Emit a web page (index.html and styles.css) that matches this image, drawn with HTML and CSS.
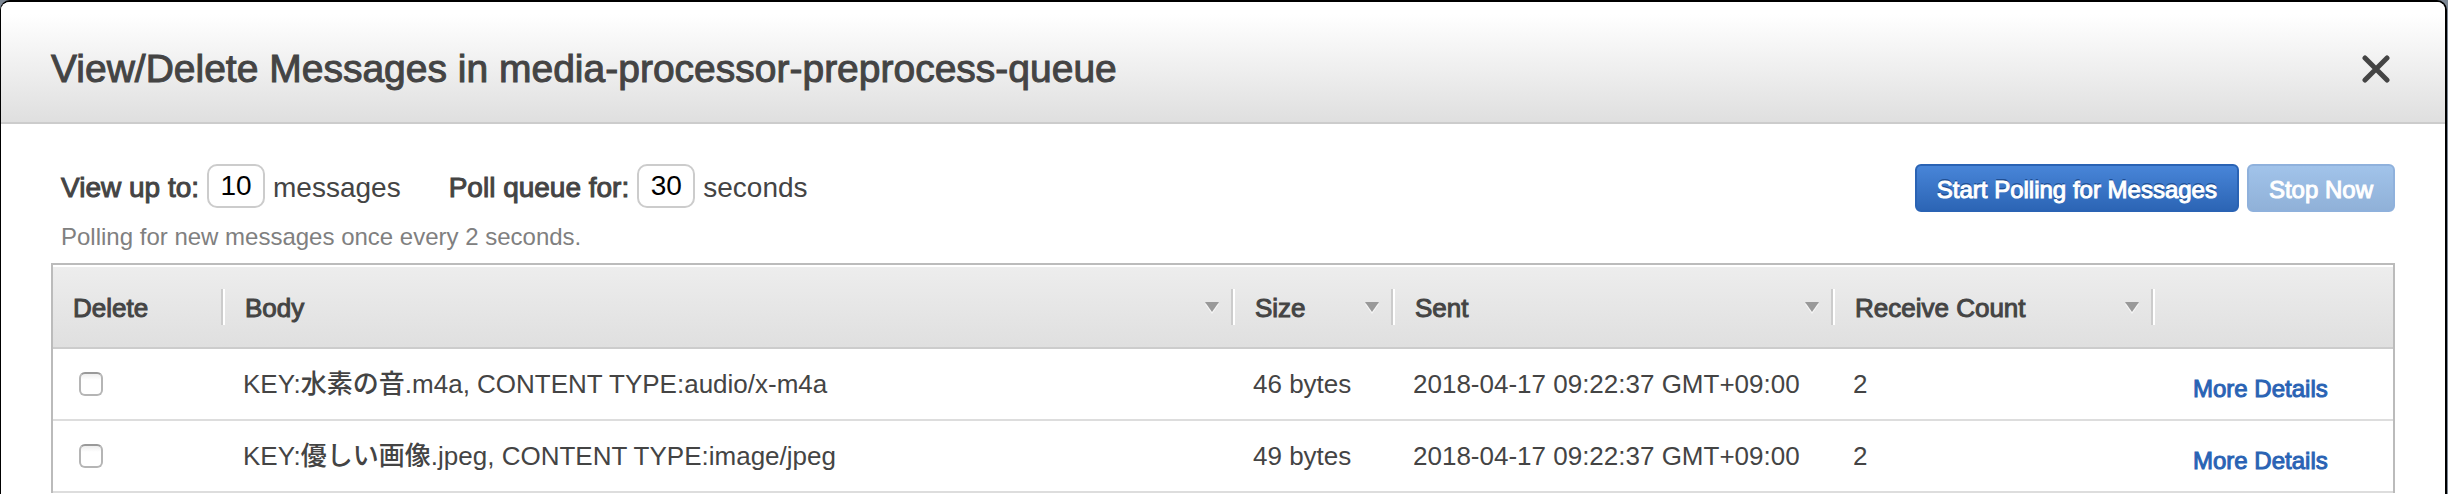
FILE: index.html
```html
<!DOCTYPE html>
<html lang="en">
<head>
<meta charset="utf-8">
<title>View/Delete Messages</title>
<link rel="stylesheet" href="styles.css">
</head>
<body>
<main class="dialog">
  <header class="dialog-header">
    <h1 class="dialog-title">View/Delete Messages in media-processor-preprocess-queue</h1>
    <button class="close" type="button" aria-label="Close">
      <svg class="close-icon" viewBox="0 0 28 28" aria-hidden="true"><path d="M3 3 25 25M25 3 3 25"/></svg>
    </button>
  </header>
  <section class="dialog-body">
    <div class="toolbar">
      <div class="settings">
        <div class="fields">
          <div class="field">
            <label class="field-label" for="limit">View up to:</label>
            <input class="field-input" id="limit" type="text" value="10">
            <span>messages</span>
          </div>
          <div class="field">
            <label class="field-label" for="duration">Poll queue for:</label>
            <input class="field-input" id="duration" type="text" value="30">
            <span>seconds</span>
          </div>
        </div>
        <p class="hint">Polling for new messages once every 2 seconds.</p>
      </div>
      <div class="actions">
        <button class="button" type="button">Start Polling for Messages</button>
        <button class="button button-disabled" type="button" disabled>Stop Now</button>
      </div>
    </div>
    <table class="messages">
      <colgroup>
        <col class="col-delete"><col><col class="col-size"><col class="col-sent"><col class="col-count"><col class="col-details">
      </colgroup>
      <thead>
        <tr>
          <th><div class="head">Delete</div></th>
          <th><div class="head">Body<svg class="sort" viewBox="0 0 14 12" aria-hidden="true"><path class="sort-light" d="M0 2h14L7 12z"/><path class="sort-dark" d="M0 0h14L7 10z"/></svg></div></th>
          <th><div class="head">Size<svg class="sort" viewBox="0 0 14 12" aria-hidden="true"><path class="sort-light" d="M0 2h14L7 12z"/><path class="sort-dark" d="M0 0h14L7 10z"/></svg></div></th>
          <th><div class="head">Sent<svg class="sort" viewBox="0 0 14 12" aria-hidden="true"><path class="sort-light" d="M0 2h14L7 12z"/><path class="sort-dark" d="M0 0h14L7 10z"/></svg></div></th>
          <th><div class="head">Receive Count<svg class="sort" viewBox="0 0 14 12" aria-hidden="true"><path class="sort-light" d="M0 2h14L7 12z"/><path class="sort-dark" d="M0 0h14L7 10z"/></svg></div></th>
          <th></th>
        </tr>
      </thead>
      <tbody>
        <tr>
          <td><input class="check" type="checkbox" aria-label="Delete message 1"></td>
          <td>KEY:<span class="name" lang="ja">水素の音</span>.m4a, CONTENT TYPE:audio/x-m4a</td>
          <td>46 bytes</td>
          <td>2018-04-17 09:22:37 GMT+09:00</td>
          <td>2</td>
          <td class="details"><a class="link" href="#message-1">More Details</a></td>
        </tr>
        <tr>
          <td><input class="check" type="checkbox" aria-label="Delete message 2"></td>
          <td>KEY:<span class="name" lang="ja">優しい画像</span>.jpeg, CONTENT TYPE:image/jpeg</td>
          <td>49 bytes</td>
          <td>2018-04-17 09:22:37 GMT+09:00</td>
          <td>2</td>
          <td class="details"><a class="link" href="#message-2">More Details</a></td>
        </tr>
      </tbody>
    </table>
  </section>
</main>
</body>
</html>
```
FILE: styles.css
```css
* {
  box-sizing: border-box;
}

body {
  margin: 0;
  padding-right: 1px;
  background: #7c8794;
  color: #444;
  font-family: "Liberation Sans", Arial, "Noto Sans CJK JP", sans-serif;
  font-size: 26px;
}

.dialog {
  min-height: 100vh;
  border: solid #000;
  border-width: 2px 2px 0 1px;
  border-radius: 10px 10px 0 0;
  background: #fff;
  overflow: hidden;
}

.dialog-header {
  display: flex;
  align-items: center;
  justify-content: space-between;
  padding: 42px 55px 28px 50px;
  border-bottom: 2px solid #ccc;
  background: linear-gradient(#fff 10%, #dfdfdf);
}

.dialog-title {
  margin: 0;
  font-size: 39px;
  font-weight: 400;
  line-height: 50px;
  -webkit-text-stroke: 1px #444;
}

.close {
  padding: 0;
  border: 0;
  background: none;
}

.close-icon {
  display: block;
  width: 28px;
  height: 28px;
  fill: none;
  stroke: #444;
  stroke-width: 5;
  stroke-linecap: round;
}

.dialog-body {
  padding: 40px 50px 0;
}

.toolbar {
  display: flex;
  align-items: flex-start;
  justify-content: space-between;
  padding-left: 10px;
}

.fields {
  display: flex;
  gap: 48px;
}

.field {
  display: flex;
  align-items: center;
  gap: 8px;
  height: 48px;
  font-size: 28px;
}

.field-label {
  -webkit-text-stroke: 1px #444;
}

.field-input {
  width: 58px;
  height: 44px;
  padding: 0;
  margin-bottom: 4px;
  border: 2px solid #ccc;
  border-radius: 10px;
  font: inherit;
  text-align: center;
  color: #000;
}

.hint {
  margin: 9px 0 10px;
  color: #808080;
  font-size: 24px;
  line-height: 32px;
}

.actions {
  display: flex;
  gap: 8px;
}

.button {
  height: 48px;
  padding: 4px 20px 0;
  border: 2px solid #2a63b4;
  border-radius: 6px;
  background: linear-gradient(#4885d8, #2c65b5);
  color: #fff;
  font-family: inherit;
  font-size: 24px;
  text-shadow: 0 -2px 0 #1f4f94;
  -webkit-text-stroke: 1px #fff;
}

.button-disabled {
  border-color: #8fb1dc;
  background: linear-gradient(#a1c3ea, #90b1d8);
  text-shadow: none;
}

.messages {
  width: 100%;
  border: solid #bbb;
  border-width: 2px 2px 0;
  border-spacing: 0;
  table-layout: fixed;
}

.col-delete { width: 172px; }
.col-size { width: 160px; }
.col-sent { width: 440px; }
.col-count { width: 320px; }
.col-details { width: 238px; }

.messages thead {
  background: linear-gradient(#fff 2px, #ededed 2px, #dfdfdf);
}

.messages th {
  height: 84px;
  padding: 2px 0 0;
  border-bottom: 2px solid #ccc;
  font-weight: 400;
  text-align: left;
  -webkit-text-stroke: 1px #444;
}

.head {
  display: flex;
  align-items: center;
  justify-content: space-between;
  height: 36px;
  padding: 2px 14px 0 20px;
  border-right: 2px solid #fff;
  box-shadow: inset -2px 0 #ccc;
}

.sort {
  width: 14px;
  height: 12px;
  stroke: none;
}

.sort-light { fill: #f6f6f6; }
.sort-dark { fill: #999; }

.messages td {
  height: 72px;
  padding: 0 0 0 18px;
  border-bottom: 2px solid #ddd;
  line-height: 36px;
  white-space: nowrap;
}

.name {
  font-weight: 500;
}

.check {
  appearance: none;
  display: block;
  width: 24px;
  height: 24px;
  margin: 0 0 0 8px;
  border: 2px solid #b5b5b5;
  border-top-color: #999;
  border-radius: 6px;
  background: linear-gradient(#eee, #fff 6px);
}

.messages .details {
  padding: 8px 0 0 38px;
}

.link {
  color: #2a63b4;
  font-size: 24px;
  text-decoration: none;
  -webkit-text-stroke: 1px #2a63b4;
}
```
